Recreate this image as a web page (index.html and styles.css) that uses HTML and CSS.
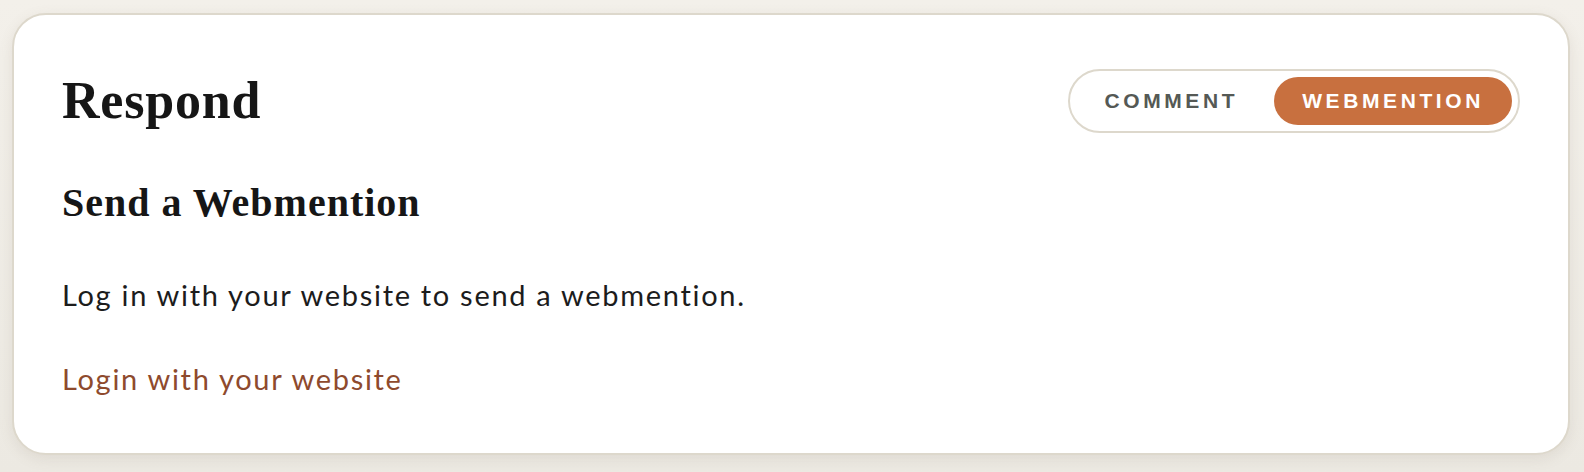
FILE: index.html
```html
<!DOCTYPE html>
<html lang="en">
<head>
<meta charset="utf-8">
<title>Respond</title>
<link rel="stylesheet" href="styles.css">
</head>
<body>
<section class="card">
  <header class="card-head">
    <h2 class="title">Respond</h2>
    <div class="toggle">
      <button class="tab">COMMENT</button>
      <button class="tab tab-active">WEBMENTION</button>
    </div>
  </header>
  <h3 class="subtitle">Send a Webmention</h3>
  <p class="text">Log in with your website to send a webmention.</p>
  <a class="link" href="#">Login with your website</a>
</section>
</body>
</html>
```

FILE: styles.css
```css
html, body {
  margin: 0;
  padding: 0;
}
body {
  background: linear-gradient(#f3f0ea, #ece9e2);
  padding: 13px 14px 17px 12px;
  height: 472px;
  box-sizing: border-box;
}
.card {
  background: #ffffff;
  border: 2px solid #ddd8cc;
  border-radius: 34px;
  box-shadow: 0 4px 14px rgba(120, 110, 90, 0.12);
  padding: 54px 48px 54px 48px;
  box-sizing: border-box;
  height: 442px;
}
.card-head {
  display: flex;
  justify-content: space-between;
  align-items: center;
  height: 64px;
}
.title {
  margin: 0;
  font-family: "Liberation Serif", serif;
  font-weight: 700;
  font-size: 52px;
  letter-spacing: 0.8px;
  line-height: 1.2;
  color: #161616;
}
.toggle {
  display: flex;
  gap: 8px;
  border: 2px solid #ddd8cc;
  border-radius: 40px;
  padding: 6px;
  background: #fff;
}
.tab {
  font-family: "Liberation Sans", Arial, sans-serif;
  font-weight: 700;
  font-size: 21px;
  letter-spacing: 3.6px;
  height: 48px;
  padding: 0 28px;
  border: 0;
  border-radius: 30px;
  background: transparent;
  color: #555955;
  cursor: pointer;
}
.tab-active {
  background: #c8703f;
  color: #ffffff;
}
.subtitle {
  margin: 46px 0 0 0;
  font-family: "Liberation Serif", serif;
  font-weight: 700;
  font-size: 40px;
  letter-spacing: 1px;
  line-height: 1.2;
  color: #161616;
}
.text {
  margin: 48px 0 0 0;
  font-family: Lato, "Open Sans", sans-serif;
  font-size: 29px;
  letter-spacing: 1.7px;
  line-height: 39px;
  color: #1c1c1c;
}
.link {
  display: block;
  margin-top: 45px;
  font-family: Lato, "Open Sans", sans-serif;
  font-size: 29px;
  letter-spacing: 1.7px;
  line-height: 39px;
  color: #8e4a2d;
  text-decoration: none;
}
```
